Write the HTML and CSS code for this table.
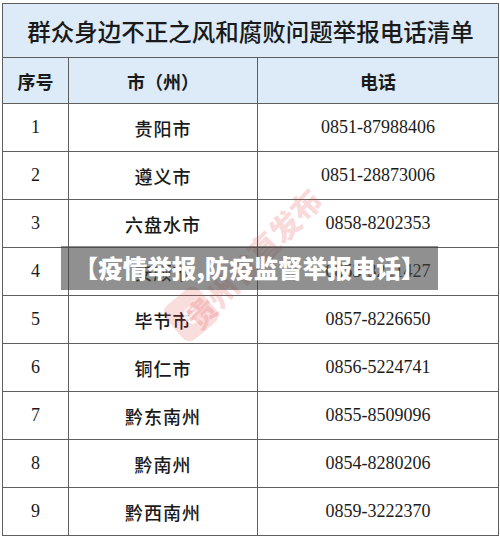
FILE: index.html
```html
<!DOCTYPE html>
<html lang="zh">
<head>
<meta charset="utf-8">
<link rel="stylesheet" href="styles.css">
</head>
<body>
<div class="page">
  <table class="list">
    <colgroup><col class="c1"><col class="c2"><col class="c3"></colgroup>
    <thead>
      <tr class="title"><th colspan="3">群众身边不正之风和腐败问题举报电话清单</th></tr>
      <tr class="head"><th>序号</th><th>市（州）</th><th>电话</th></tr>
    </thead>
    <tbody>
      <tr><td class="n">1</td><td class="city">贵阳市</td><td class="tel">0851-87988406</td></tr>
      <tr><td class="n">2</td><td class="city">遵义市</td><td class="tel">0851-28873006</td></tr>
      <tr><td class="n">3</td><td class="city">六盘水市</td><td class="tel">0858-8202353</td></tr>
      <tr><td class="n">4</td><td class="city">安顺市</td><td class="tel">0853-3221427</td></tr>
      <tr><td class="n">5</td><td class="city">毕节市</td><td class="tel">0857-8226650</td></tr>
      <tr><td class="n">6</td><td class="city">铜仁市</td><td class="tel">0856-5224741</td></tr>
      <tr><td class="n">7</td><td class="city">黔东南州</td><td class="tel">0855-8509096</td></tr>
      <tr><td class="n">8</td><td class="city">黔南州</td><td class="tel">0854-8280206</td></tr>
      <tr><td class="n">9</td><td class="city">黔西南州</td><td class="tel">0859-3222370</td></tr>
    </tbody>
  </table>
  <div class="mark">
    <span class="mark-logo">e</span>
    <span class="mark-text">贵州省直发布</span>
  </div>
  <div class="banner">【疫情举报,防疫监督举报电话】</div>
</div>
</body>
</html>
```
FILE: styles.css
```css
html, body {
  margin: 0;
  padding: 0;
  background: #ffffff;
}
.page {
  position: relative;
  width: 500px;
  height: 536px;
  padding: 3px 0 0 2px;
  box-sizing: border-box;
  overflow: hidden;
}
.list {
  border-collapse: collapse;
  width: 496px;
  table-layout: fixed;
}
.c1 { width: 66px; }
.c2 { width: 189px; }
.c3 { width: 241px; }
.list th, .list td {
  border: 1px solid #5e5e5e;
  padding: 0;
  text-align: center;
  color: #1a1a1a;
}
.title th {
  height: 53px;
  background: #dcebf7;
  font-family: "Noto Sans CJK SC", sans-serif;
  font-weight: 500;
  font-size: 23.5px;
  white-space: nowrap;
}
.head th {
  height: 45px;
  background: #dcebf7;
  font-family: "Noto Sans CJK SC", sans-serif;
  font-weight: 700;
  font-size: 18px;
}
.list td {
  height: 47px;
}
.n, .tel {
  font-family: "Liberation Serif", "Times New Roman", serif;
  font-size: 18px;
}
.tel { padding-left: 4px; }
.city {
  font-family: "Noto Sans CJK SC", sans-serif;
  font-weight: 500;
  font-size: 18px;
  letter-spacing: 1px;
}
.mark {
  position: absolute;
  left: 160px;
  top: 190px;
  width: 200px;
  height: 160px;
  pointer-events: none;
}
.mark-logo {
  position: absolute;
  left: 9px;
  top: 102px;
  width: 44px;
  height: 44px;
  border-radius: 9px;
  background: rgba(226, 70, 70, 0.18);
  color: rgba(255, 255, 255, 0.9);
  font: 700 32px/42px "Liberation Sans", sans-serif;
  text-align: center;
  transform: rotate(-40deg);
}
.mark-text {
  position: absolute;
  top: 104px;
  left: 46px;
  font-family: "Noto Sans CJK SC", sans-serif;
  font-weight: 900;
  font-size: 30px;
  color: rgba(225, 60, 60, 0.2);
  transform: rotate(-46deg);
  transform-origin: left bottom;
  white-space: nowrap;
}
.banner {
  position: absolute;
  left: 61px;
  top: 246px;
  width: 377px;
  height: 44px;
  background: rgba(70, 70, 70, 0.6);
  color: #ffffff;
  font-family: "Noto Sans CJK SC", sans-serif;
  font-weight: 900;
  font-size: 24.5px;
  line-height: 44px;
  text-align: center;
  white-space: nowrap;
}
```
